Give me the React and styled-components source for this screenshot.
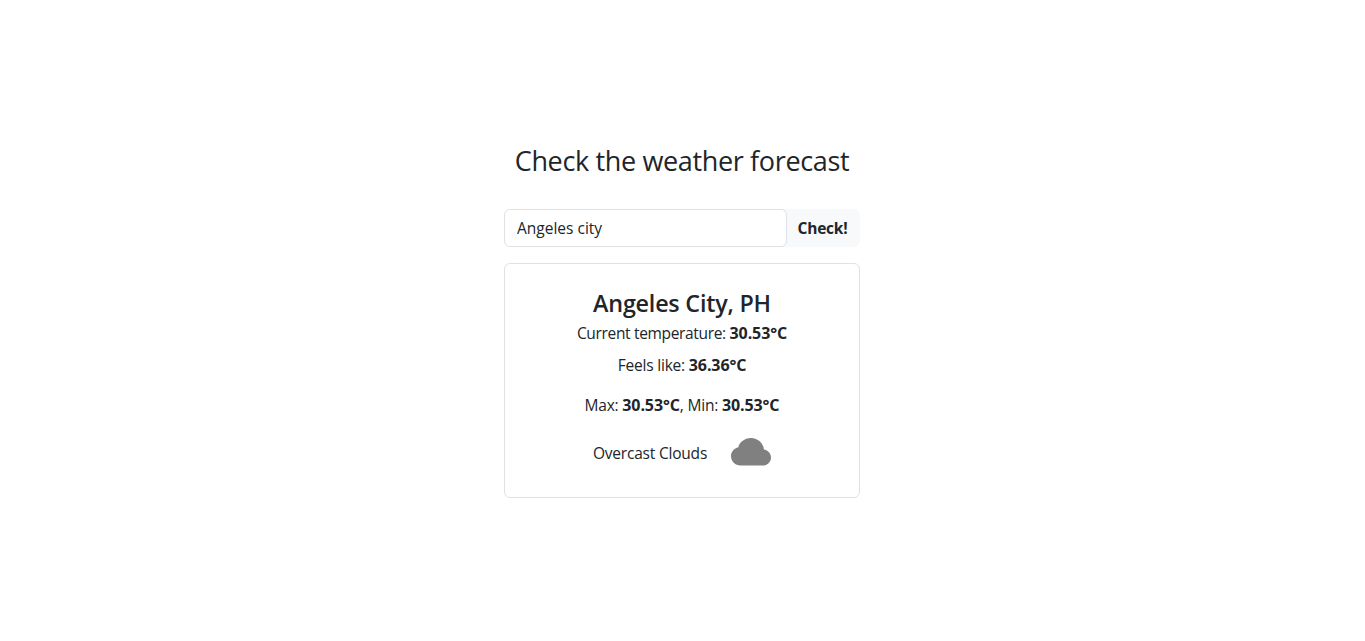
import React from "react";
import styled, { createGlobalStyle } from "styled-components";

const GlobalStyle = createGlobalStyle`
  *, *::before, *::after { box-sizing: border-box; }
  body {
    margin: 0;
    background: #fff;
    color: #212529;
    font: 400 16px/24px "Segoe UI", "Open Sans", "Noto Sans", sans-serif;
  }
`;

const Page = styled.main`
  display: flex;
  flex-direction: column;
  align-items: center;
  height: 641px;
  padding: 144px 1px 0 0;
`;

const Title = styled.h1`
  margin: 0 0 31px;
  font-size: 27px;
  font-weight: 400;
  line-height: 34px;
  letter-spacing: -0.35px;
  white-space: nowrap;
`;

const Text = styled.span`
  font-size: 15.5px;
  white-space: nowrap;
  letter-spacing: ${(p) => p.$track ?? -0.2}px;

  b {
    font-size: 16px;
    letter-spacing: -0.1px;
  }
`;

const SearchForm = styled.form`
  display: flex;
  width: 356px;
  height: 38px;
  margin-bottom: 16px;
  background: #f8f9fa;
  border-radius: 6px;
`;

const CityInput = styled.input`
  width: 283px;
  padding: 6px 12px;
  border: 1px solid #dee2e6;
  border-radius: 6px;
  background: #fff;
  color: inherit;
  font: inherit;
  font-size: 15.5px;
`;

const CheckButton = styled.button`
  flex: 1;
  padding: 0 2px 0 0;
  border: 0;
  background: transparent;
  color: #212529;
  font: inherit;
  font-weight: 700;
`;

const Card = styled.section`
  display: flex;
  flex-direction: column;
  align-items: center;
  width: 356px;
  height: 235px;
  padding-top: 25px;
  border: 1px solid #dee2e6;
  border-radius: 6px;
`;

const City = styled.h2`
  margin: 0 0 3px;
  font-size: 23.3px;
  font-weight: 600;
  line-height: 29px;
  letter-spacing: -0.2px;
`;

const Reading = styled.p`
  height: 24px;
  margin: 0 0 ${(p) => p.$gap}px;
`;

const Conditions = styled.div`
  display: flex;
  align-items: center;
  gap: 24px;
  height: 40px;
`;

export default function App() {
  return (
    <>
      <GlobalStyle />
      <Page>
        <Title>Check the weather forecast</Title>
        <SearchForm onSubmit={(e) => e.preventDefault()}>
          <CityInput defaultValue="Angeles city" aria-label="City" />
          <CheckButton type="submit"><Text>Check!</Text></CheckButton>
        </SearchForm>
        <Card>
          <City>Angeles City, PH</City>
          <Reading $gap={8}><Text $track={-0.33}>Current temperature: <b>30.53°C</b></Text></Reading>
          <Reading $gap={16}><Text>Feels like: <b>36.36°C</b></Text></Reading>
          <Reading $gap={16}><Text>Max: <b>30.53°C</b>, Min: <b>30.53°C</b></Text></Reading>
          <Conditions>
            <Text>Overcast Clouds</Text>
            <svg width="40" height="40" viewBox="0 0 16 16" fill="gray" aria-hidden="true">
              <path d="M4.406 3.342A5.53 5.53 0 0 1 8 2c2.69 0 4.923 2 5.166 4.579C14.758 6.804 16 8.137 16 9.773 16 11.569 14.502 13 12.687 13H3.781C1.708 13 0 11.366 0 9.318c0-1.763 1.266-3.223 2.942-3.593.143-.863.698-1.723 1.464-2.383" />
            </svg>
          </Conditions>
        </Card>
      </Page>
    </>
  );
}
